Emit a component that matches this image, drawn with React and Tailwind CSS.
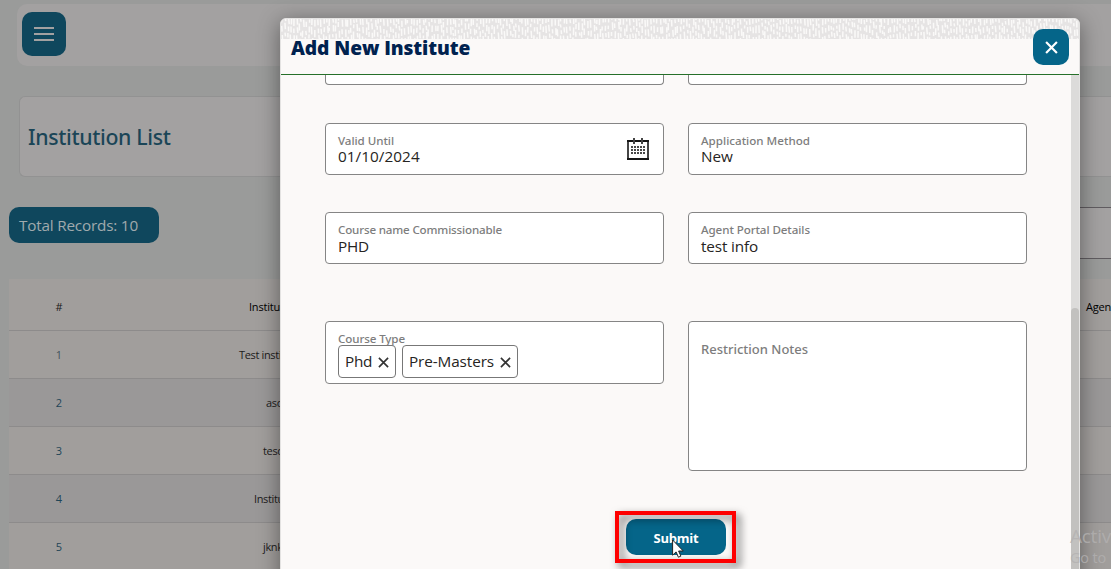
const ROWS = [
  { n: "1", name: "Test institute", pad: "pl-[230px]", bg: "bg-[#a19e9c]", num: "text-[#42535c]" },
  { n: "2", name: "asd", pad: "pl-[257px]", bg: "bg-[#9a9898]", num: "text-[#1f4557]" },
  { n: "3", name: "tesd", pad: "pl-[254px]", bg: "bg-[#a19e9c]", num: "text-[#1f4557]" },
  { n: "4", name: "Institute", pad: "pl-[245px]", bg: "bg-[#9a9898]", num: "text-[#1f4557]" },
  { n: "5", name: "jknk", pad: "pl-[254px]", bg: "bg-[#a19e9c]", num: "text-[#1f4557]" },
];

// Short, irregular vertical dashes for the decorative strip
function makeDashes() {
  let seed = 7;
  const rnd = () => {
    seed = (seed * 16807) % 2147483647;
    return seed / 2147483647;
  };
  let light = "";
  for (let x = 1; x < 798; x += 3) {
    let y = rnd() * 5 - 4;
    while (y < 20) {
      const len = 3 + rnd() * 5;
      const dx = rnd() * 1.6 - 0.8;
      light += `M${(x + dx).toFixed(1)} ${y.toFixed(1)}l${(rnd() * 0.8 - 0.2).toFixed(1)} ${len.toFixed(1)}`;
      y += len + 1.5 + rnd() * 2.5;
    }
  }
  return light;
}
const DASHES = makeDashes();

function Field({ label, value, labelCls, valueCls, low, children }) {
  return (
    <div className="flex h-[52px] justify-between rounded-[4px] border border-[#858585] bg-white pr-[14px] pl-3">
      <div className="pt-[9px]">
        <div className={`text-[11.6px] leading-4 font-medium whitespace-nowrap text-[#7d7d7d] ${labelCls}`}>{label}</div>
        <div className={`font-['Open_Sans',sans-serif] text-[15.3px] whitespace-nowrap text-[#262422] ${low ? "leading-4" : "leading-[15px]"} ${valueCls}`}>{value}</div>
      </div>
      {children}
    </div>
  );
}

function Cross({ className, width }) {
  return (
    <svg viewBox="0 0 12 12" className={className} fill="none" stroke="currentColor" strokeWidth={width}>
      <path d="M1 1l10 10M11 1L1 11" />
    </svg>
  );
}

function Chip({ text, cls, w }) {
  return (
    <div className={`flex h-[33px] items-center justify-between rounded-[4px] border border-[#777] bg-white pr-[6px] pl-[6px] font-['Open_Sans',sans-serif] text-[15.3px] text-[#262422] ${w}`}>
      <span className={cls}>{text}</span>
      <Cross className="mt-px size-[11px] text-[#333]" width="1.8" />
    </div>
  );
}

function Calendar() {
  const dots = [];
  for (let r = 0; r < 3; r++) for (let c = 0; c < 5; c++) dots.push([c, r]);
  return (
    <svg viewBox="0 0 22 22" className="mt-[14px] h-[22px] w-[22px]" shapeRendering="crispEdges">
      <path d="M0 2h2v20H0zM20 2h2v20h-2z" fill="#454545" />
      <path d="M0 2h22v2H0zM0 20h22v2H0z" fill="#161616" />
      <path d="M6 0h2v6H6zM14 0h2v6h-2z" fill="#454545" />
      {dots.map(([c, r]) => (
        <rect key={`${c}-${r}`} x={4 + c * 3} y={8 + r * 3} width="2" height="2" fill="#4a4a4a" />
      ))}
    </svg>
  );
}

function Background() {
  return (
    <div className="flex h-full flex-col bg-[#9a9b9a]">
      <div className="mt-1 ml-[17px] flex h-[62px] shrink-0 rounded-l-[10px] bg-[#a3a1a1] pt-2 pl-[5px]">
        <div className="flex size-[44px] items-center justify-center rounded-[10px] bg-[#0f475d]">
          <div className="flex w-[20px] flex-col gap-1">
            <div className="h-[2px] bg-[#a3a1a1]" />
            <div className="h-[2px] bg-[#a3a1a1]" />
            <div className="h-[2px] bg-[#a3a1a1]" />
          </div>
        </div>
      </div>
      <div className="mt-[30px] ml-[19px] flex h-[81px] shrink-0 items-center rounded-l-[6px] border border-r-0 border-[#929292] bg-[#a3a1a1] pl-2">
        <h1 className="text-[21.3px] font-medium tracking-[-0.35px] whitespace-nowrap text-[#1a4557]">Institution List</h1>
      </div>
      <div className="mt-[30px] flex h-[52px] shrink-0 items-start justify-between pl-[9px]">
        <div className="h-[36px] w-[150px] rounded-[10px] bg-[#0f475d] pl-[10px] font-['Open_Sans',sans-serif] text-[15.3px] leading-[37px] tracking-[-0.2px] whitespace-nowrap text-[#a0aaad]">
          Total Records: 10
        </div>
        <div className="h-[52px] w-[60px] border-y border-[#605c60] bg-[#a3a1a1]" />
      </div>
      <div className="mt-[20px] ml-[9px] font-['Open_Sans',sans-serif] text-[11px] text-[#1c1b1b]">
        <div className="flex h-[52px] items-center border-b border-[#8d8b8b] bg-[#a19e9c] pt-[5px]">
          <div className="w-[100px] text-center">#</div>
          <div className="w-[900px] pl-[140px] tracking-[-0.2px] text-black">Institution</div>
          <div className="-ml-px w-[103px] shrink-0 pl-[78px] font-medium tracking-[-0.21px] text-black">Agen</div>
        </div>
        {ROWS.map((r) => (
          <div key={r.n} className={`flex h-[48px] items-center border-b border-[#8d8b8b] pt-[2px] whitespace-nowrap ${r.bg}`}>
            <div className={`-mr-[100px] w-[100px] text-center ${r.num}`}>{r.n}</div>
            <div className={`${r.pad} tracking-[-0.35px]`}>{r.name}</div>
          </div>
        ))}
      </div>
    </div>
  );
}

function Modal() {
  return (
    <div className="absolute top-[18px] left-[280px] flex h-[600px] w-[800px] flex-col overflow-hidden rounded-t-[6px] border border-[#e4e3e2] bg-[#fbf9f8]">
      <svg viewBox="0 0 798 20" className="h-5 w-[798px] shrink-0 bg-[#e6e4e4]">
        <path d={DASHES} stroke="#faf9f8" strokeWidth="1.5" fill="none" />
      </svg>
      <div className="flex h-[36px] shrink-0 items-start justify-between border-b border-[#26702a] pr-[10px] pl-[10px]">
        <h2 className="-mt-[6px] font-['Open_Sans',sans-serif] text-[19.2px] leading-[30px] font-extrabold tracking-[-0.09px] whitespace-nowrap text-[#00224f]">Add New Institute</h2>
        <button className="-mt-[10px] flex size-[36px] items-center justify-center rounded-[10px] bg-[#056589] text-white">
          <Cross className="size-[13px]" width="2" />
        </button>
      </div>
      <div className="flex h-[494px] shrink-0">
        <div className="flex w-[790px] flex-col px-11">
          <div className="grid grid-cols-2 gap-x-6">
            <div className="h-[10px] rounded-b-[4px] border border-t-0 border-[#858585] bg-white" />
            <div className="h-[10px] rounded-b-[4px] border border-t-0 border-[#858585] bg-white" />
          </div>
          <div className="mt-[38px] grid grid-cols-2 gap-x-6">
            <Field label="Valid Until" labelCls="tracking-[-0.05px]" value="01/10/2024" valueCls="tracking-[0.05px]">
              <Calendar />
            </Field>
            <Field label="Application Method" labelCls="tracking-[0.01px]" value="New" valueCls="tracking-[0px]" />
          </div>
          <div className="mt-[37px] grid grid-cols-2 gap-x-6">
            <Field low label="Course name Commissionable" labelCls="tracking-[-0.17px]" value="PHD" valueCls="tracking-[-0.2px]" />
            <Field low label="Agent Portal Details" labelCls="tracking-[-0.08px]" value="test info" valueCls="tracking-[-0.15px]" />
          </div>
          <div className="mt-[57px] grid grid-cols-2 items-start gap-x-6">
            <div className="h-[63px] rounded-[4px] border border-[#858585] bg-white pt-[9px] pl-3">
              <div className="h-[14px] text-[11.6px] leading-4 font-medium tracking-[-0.11px] text-[#7d7d7d]">Course Type</div>
              <div className="flex gap-[6px]">
                <Chip text="Phd" cls="tracking-[-0.3px]" w="w-[58px]" />
                <Chip text="Pre-Masters" cls="tracking-[-0.1px]" w="w-[116px]" />
              </div>
            </div>
            <div className="h-[150px] rounded-[4px] border border-[#858585] bg-white pt-[17px] pl-3 text-[13px] leading-5 font-medium text-[#7d7d7d]">
              Restriction Notes
            </div>
          </div>
          <div className="mt-[48px] flex justify-center">
            <div className="relative">
              <button className="flex h-[36px] w-[100px] items-center justify-center rounded-[10px] bg-[#056589] pt-[3px] font-['Open_Sans',sans-serif] text-[13px] font-bold tracking-[-0.218px] text-white">
                Submit
              </button>
              <div className="absolute -top-2 -left-[11px] h-[52px] w-[121px] border-4 border-[#fe0000] drop-shadow-[4px_4px_4px_rgba(0,0,0,0.6)]" />
              <svg viewBox="0 0 12 19" className="absolute top-[20px] left-[46px] h-[19px] w-[12px]">
                <path d="M.6 1v15.2l3.5-3.3 2.3 5.3 2.5-1.1-2.3-5.1h4.7z" fill="#fff" stroke="#222" strokeWidth="1" />
              </svg>
            </div>
          </div>
        </div>
        <div className="flex w-2 flex-col bg-[#dcdbda] pt-[233px]">
          <div className="grow rounded-t-[4px] bg-[#c2c1bf]" />
        </div>
      </div>
    </div>
  );
}

export default function App() {
  return (
    <div className="relative h-[569px] w-[1111px] overflow-hidden font-['Noto_Sans',sans-serif]">
      <Background />
      <div className="absolute top-[18px] left-[280px] h-[640px] w-[800px] rounded-[6px] shadow-[0_4px_22px_rgba(0,0,0,0.42)]" />
      <Modal />
      <div className="absolute top-[523px] left-[1070px] font-['Open_Sans',sans-serif] whitespace-nowrap text-[#b3b1b1]/80">
        <div className="text-[19px] leading-[26px] tracking-[-0.25px]">Activ</div>
        <div className="text-[14.5px] leading-[18px] tracking-[-0.2px]">Go to</div>
      </div>
    </div>
  );
}
